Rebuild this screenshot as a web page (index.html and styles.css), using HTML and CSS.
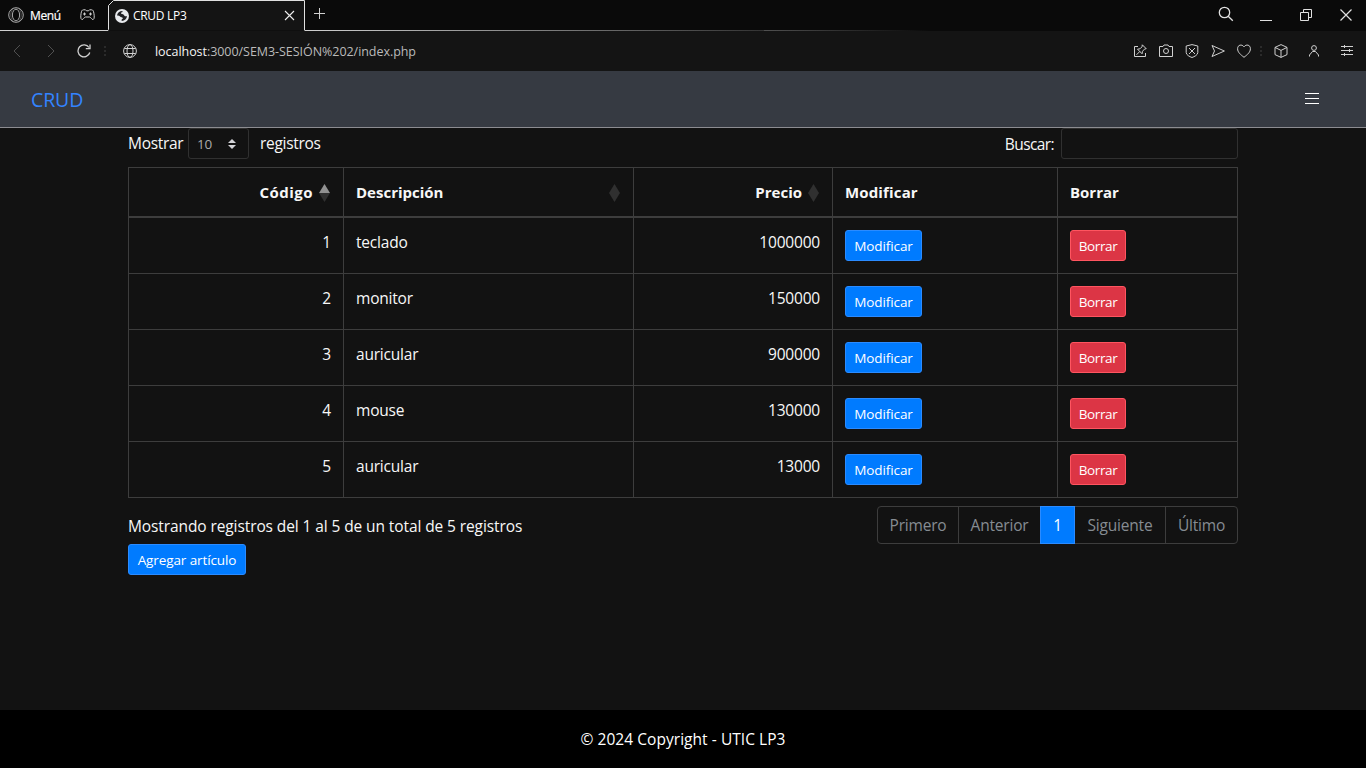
FILE: index.html
```html
<!DOCTYPE html>
<html lang="es">
<head>
<meta charset="utf-8">
<title>CRUD LP3</title>
<link rel="stylesheet" href="styles.css">
</head>
<body>
<header class="tabbar">
  <div class="menu">
    <svg class="opera" width="16" height="16" viewBox="0 0 16 16"><circle cx="8" cy="8" r="7.3"/><ellipse cx="8" cy="8" rx="3.6" ry="5.8"/><path d="M6 1.200C3.800 2.500 2.800 5 2.800 8s1 5.500 3.200 6.800M10 1.200c2.200 1.300 3.200 3.800 3.200 6.800s-1 5.500-3.200 6.800" opacity=".4"/></svg>
    <span class="menu-text">Menú</span>
    <svg class="pad" width="15" height="12" viewBox="0 0 15 12"><path d="M3.500.8h2l1 1h2l1-1h2c1.500 0 2 1.200 2.400 3.500.4 2.500.7 5.500-.7 6.200-1.500.5-2.300-2.500-3.500-2.500H5.300c-1.200 0-2 3-3.500 2.500C.4 9.800.7 6.800 1.100 4.300 1.500 2 2 .8 3.500.8z"/><path d="M3 5h3M4.500 3.500v3M9 5h3M10.500 3.500v3"/></svg>
  </div>
  <div class="tab">
    <svg class="tab-shape" width="197" height="31" viewBox="0 0 197 31"><path d="M0 30.500V30l.5-.5V5.500L5.500.5h191v30" /></svg>
    <svg class="favicon" width="14" height="14" viewBox="0 0 14 14"><circle cx="7" cy="7" r="7" fill="#e8eaed"/><path d="M2 6.500C2.300 3.800 4.500 2 7.500 2c.3 1.200-.6 1.400-1.500 1.600-.4 1.300.6 1.500 2 1.700 1.300.3 1 1.600 2 1.900.8.200 1.500 0 2-.2-.2 2.800-2.300 4.900-5.200 5-.6-1.200.1-1.800 1-2.200.2-1.400-.8-1.700-2.200-1.800C4.700 6.800 3.300 6.500 2 6.500z" fill="#202124"/></svg>
    <span class="tab-title">CRUD LP3</span>
    <svg class="tab-close" width="11" height="11" viewBox="0 0 11 11"><path d="M1 1l9 9M10 1l-9 9"/></svg>
  </div>
  <div class="tab-rest">
    <svg class="plus" width="11" height="11" viewBox="0 0 11 11"><path d="M5.500 0v11M0 5.500h11"/></svg>
    <div class="window-tools">
      <svg width="16" height="16" viewBox="0 0 16 16"><circle cx="6.500" cy="6.500" r="5.200"/><path d="M10.200 10.200l4.600 4.600"/></svg>
      <svg class="minimize" width="12" height="2" viewBox="0 0 12 2"><path d="M0 .5h12"/></svg>
      <svg class="restore" width="12" height="12" viewBox="0 0 12 12"><path d="M.5 3.500h8v8h-8zM3.500 3.500v-3h8v8h-3"/></svg>
      <svg width="12" height="12" viewBox="0 0 12 12"><path d="M.5.5l11 11M11.500.5l-11 11"/></svg>
    </div>
  </div>
</header>
<nav class="address">
  <svg class="back" width="8" height="14" viewBox="0 0 8 14"><path d="M7 1L1 7l6 6"/></svg>
  <svg class="forward" width="8" height="14" viewBox="0 0 8 14"><path d="M1 1l6 6-6 6"/></svg>
  <svg class="reload" width="14" height="14" viewBox="0 0 14 14"><path d="M12 3.500A6 6 0 1 0 12.800 8.500"/><path d="M13 .5v4.200H8.800"/></svg>
  <i class="dots"></i>
  <svg class="globe" width="14" height="14" viewBox="0 0 14 14"><circle cx="7" cy="7" r="6.400"/><ellipse cx="7" cy="7" rx="3" ry="6.400"/><path d="M1.300 4.500h11.400M1.300 9.500h11.400"/></svg>
  <span class="url"><b>localhost</b>:3000/SEM3-SESIÓN%202/index.php</span>
  <div class="address-tools">
    <svg width="14" height="14" viewBox="0 0 14 14"><path d="M5 2.500H1.500v10h11V9"/><path d="M9.300.8l3.900 3.900-1.700.4-2 2.200-.4 2.500L4.500 5.200 7 4.800l2-2zM6.800 7.500L3.500 10.800"/></svg>
    <svg width="14" height="14" viewBox="0 0 14 14"><path d="M.5 2.500H4L5 1h4l1 1.500h3.500v10H.5z"/><circle cx="7" cy="7" r="2.500"/></svg>
    <svg width="14" height="14" viewBox="0 0 14 14"><path d="M7 .6L12.800 2v6.500C12.800 11 9.500 12.600 7 13.500 4.500 12.600 1.200 11 1.200 8.500V2z"/><path d="M4 4l6 6M10 4l-6 6"/></svg>
    <svg width="14" height="14" viewBox="0 0 14 14"><path d="M1 1.500L13.400 7 1 12.500 3.500 7z"/></svg>
    <svg width="14" height="14" viewBox="0 0 14 14"><path d="M7 13.300C3.500 10.500.6 8.300.6 4.700.6.600 5 0 7 2.800 9 0 13.400.600 13.400 4.700c0 3.600-2.900 5.800-6.400 8.600z"/></svg>
    <i class="dots"></i>
    <svg class="cube" width="14" height="14" viewBox="0 0 14 14"><path d="M7 .6l6 2.800v7.200l-6 2.800-6-2.800V3.400zM1 3.400l6 3 6-3M7 6.400v7"/></svg>
    <svg class="person" width="12" height="14" viewBox="0 0 12 14"><circle cx="6" cy="4" r="2.400"/><path d="M1.500 12.500V11l3-3.500h3l3 3.500v1.500"/></svg>
    <svg class="sliders" width="12" height="12" viewBox="0 0 12 12"><path d="M0 1.500h12M0 5.500h12M0 9.500h12M3.500 0v3M8.500 4v3M3.500 8v3"/></svg>
  </div>
</nav>
<nav class="navbar">
  <a class="brand">CRUD</a>
  <div class="burger"><i></i><i></i><i></i></div>
</nav>
<main class="container">
  <div class="controls">
    <label class="length"><span class="t-mostrar">Mostrar</span>
      <span class="select"><span>10</span><svg width="8" height="10" viewBox="0 0 8 10"><path d="M4 0l4 4H0zM4 10L0 6h8z"/></svg></span>
      <span class="t-registros">registros</span></label>
    <label class="search"><span class="t-buscar">Buscar:</span><input type="text"></label>
  </div>
  <table class="table">
    <colgroup><col class="c1"><col class="c2"><col class="c3"><col class="c4"><col class="c5"></colgroup>
    <thead><tr>
      <th class="num"><div class="sort codigo"><span>Código</span><svg width="11" height="18" viewBox="0 0 11 18"><path class="on" d="M5.500 0L11 9H0z"/><path d="M5.500 18L0 9h11z"/></svg></div></th>
      <th><div class="sort wide"><span>Descripción</span><svg width="11" height="18" viewBox="0 0 11 18"><path d="M5.500 0L11 9 5.500 18 0 9z"/></svg></div></th>
      <th class="num"><div class="sort"><span>Precio</span><svg width="11" height="18" viewBox="0 0 11 18"><path d="M5.500 0L11 9 5.500 18 0 9z"/></svg></div></th>
      <th class="loose">Modificar</th><th>Borrar</th></tr></thead>
    <tbody>
      <tr><td class="num">1</td><td>teclado</td><td class="num">1000000</td><td><button class="btn mod">Modificar</button></td><td><button class="btn del">Borrar</button></td></tr>
      <tr><td class="num">2</td><td>monitor</td><td class="num">150000</td><td><button class="btn mod">Modificar</button></td><td><button class="btn del">Borrar</button></td></tr>
      <tr><td class="num">3</td><td>auricular</td><td class="num">900000</td><td><button class="btn mod">Modificar</button></td><td><button class="btn del">Borrar</button></td></tr>
      <tr><td class="num">4</td><td>mouse</td><td class="num">130000</td><td><button class="btn mod">Modificar</button></td><td><button class="btn del">Borrar</button></td></tr>
      <tr><td class="num">5</td><td>auricular</td><td class="num">13000</td><td><button class="btn mod">Modificar</button></td><td><button class="btn del">Borrar</button></td></tr>
    </tbody>
  </table>
  <div class="below">
    <span class="info">Mostrando registros del 1 al 5 de un total de 5 registros</span>
    <div class="pages"><span class="p1">Primero</span><span class="p2">Anterior</span><span class="p3">1</span><span class="p4">Siguiente</span><span class="p5">Último</span></div>
  </div>
  <button class="btn add">Agregar artículo</button>
</main>
<footer class="footer"><span>© 2024 Copyright - UTIC LP3</span></footer>
</body>
</html>
```
FILE: styles.css
```css
* { box-sizing: border-box; }
body {
  margin: 0;
  height: 768px;
  overflow: hidden;
  display: flex;
  flex-direction: column;
  background: #121212;
  color: #f7f7f7;
  font: 15.5px/24px "Open Sans", "Noto Sans", sans-serif;
}
svg { display: block; flex: none; fill: none; stroke: #d0d0d0; stroke-width: 1; }

.tabbar { display: flex; height: 31px; flex: none; background: #0a0a0a; }
.menu { width: 108px; padding-left: 8px; display: flex; align-items: center; border-bottom: 1px solid #d0d0d0; }
.opera { stroke: #aaa; }
.menu-text { width: 50px; margin-left: 6px; padding-top: 1px; font-size: 12px; color: #fff; letter-spacing: -.4px; -webkit-text-stroke: .2px #fff; }
.tab { position: relative; width: 197px; padding: 0 10px 0 7px; display: flex; align-items: center; }
.tab-shape { position: absolute; left: 0; top: 0; }
.tab-shape path { fill: #141414; stroke: #e0e0e0; }
.favicon { position: relative; stroke: none; }
.tab-title { position: relative; margin-left: 4px; font-size: 12px; color: #fff; letter-spacing: -.3px; }
.tab-close { position: relative; margin-left: auto; stroke: #eee; stroke-width: 1.1; }
.tab-rest {
  flex: 1;
  display: flex;
  justify-content: space-between;
  padding: 8px 14px 0 9px;
  background:
    linear-gradient(90deg, #d0d0d0, #333) 0 100% / 459px 1px no-repeat,
    linear-gradient(90deg, #505050, #0a0a0a) 459px 100% / 165px 1px no-repeat;
}
.window-tools { display: flex; margin-top: -2px; }
.window-tools svg { stroke: #e0e0e0; }
.window-tools svg:first-child { stroke-width: 1.3; }
.window-tools .minimize { margin: 14px 0 0 26px; }
.window-tools .restore { margin: 3px 28px 0; }
.window-tools svg:last-child { margin-top: 3px; stroke-width: 1.2; }

.address { display: flex; align-items: center; height: 40px; flex: none; padding: 0 13px; background: #141414; }
.back, .forward { stroke: #505050; }
.forward { margin-left: 26px; }
.reload { margin-left: 22px; stroke-width: 1.3; }
.dots { width: 2px; height: 10px; flex: none; background: linear-gradient(#2b2b2b 2px, transparent 2px) 0 0 / 2px 4px; }
.reload + .dots { margin-left: 13px; }
.globe { margin-left: 17px; }
.url { margin-left: 18px; padding-top: 1px; font-size: 12.500px; letter-spacing: -.05px; color: #bbb; }
.url b { color: #f4f4f4; font-weight: 400; }
.address-tools { margin-left: auto; display: flex; align-items: center; gap: 12px; }
.address-tools .dots { margin-left: -3px; }
.address-tools .person { margin-left: 8px; }
.address-tools .sliders { margin-left: 9px; }

.navbar { height: 57px; flex: none; display: flex; justify-content: space-between; background: #363a42; border-bottom: 1px solid #8c8c91; padding: 14px 47px 0 31px; }
.brand { font-size: 19.500px; line-height: 30px; letter-spacing: -.1px; color: #3384ff; }
.burger { width: 14px; padding-top: 8px; display: flex; flex-direction: column; gap: 4px; }
.burger i { height: 1px; background: #fff; }

.container { width: 1110px; margin: 0 auto; flex: 1; letter-spacing: -.1px; }
.controls { display: flex; justify-content: space-between; height: 39px; }
.length, .search { display: flex; align-items: flex-start; }
.t-mostrar { width: 60px; padding-top: 3px; letter-spacing: -.3px; white-space: nowrap; }
.t-registros { padding: 3px 0 0 11px; letter-spacing: -.3px; }
.t-buscar { padding: 4px 7px 0 0; letter-spacing: -.6px; }
.select { width: 61px; height: 31px; padding: 0 12px 0 8px; display: flex; justify-content: space-between; align-items: center; border: 1px solid #303030; border-radius: 3px; font-size: 13.500px; color: #aaa; }
.select svg { stroke: none; fill: #d4d4d8; }
.search input { width: 177px; height: 31px; border: 1px solid #303030; border-radius: 3px; background: transparent; color: inherit; }

.table { width: 1110px; table-layout: fixed; border-collapse: separate; border-spacing: 0; border-right: 1px solid #3d3d3d; }
.c1 { width: 215px; } .c2 { width: 290px; } .c3 { width: 199px; } .c4 { width: 225px; } .c5 { width: 180px; }
th, td { padding: 12px 12px 0; border: 0 solid #3d3d3d; border-left-width: 1px; text-align: left; vertical-align: top; }
th { height: 51px; border-top-width: 1px; border-bottom-width: 2px; font-weight: 700; font-size: 15px; letter-spacing: 0; }
td { height: 56px; padding-top: 12px; border-bottom-width: 1px; letter-spacing: -.2px; }
td:last-child, th:last-child { padding-left: 12px; }
.num { text-align: right; }
.loose { letter-spacing: .15px; }
.sort { display: flex; justify-content: flex-end; align-items: center; gap: 6px; margin-right: 1px; }
.codigo { letter-spacing: .45px; }
.sort.wide { justify-content: space-between; }
.sort svg { stroke: none; fill: #303030; margin-top: 1px; }
.sort .on { fill: #919191; }

.btn { display: flex; align-items: center; justify-content: center; height: 31px; padding: 2px 0 0; border: 1px solid #2b8bff; border-radius: 3px; background: #007bff; color: #fff; font: 13.500px/21px "Open Sans", "Noto Sans", sans-serif; letter-spacing: -.1px; white-space: nowrap; }
.del { width: 56px; background: #dc3545; border-color: #ff5560; letter-spacing: -.4px; }
.mod { width: 77px; }
.add { width: 118px; }

.below { display: flex; justify-content: space-between; margin-top: 8px; height: 38px; }
.info { line-height: 24px; padding-top: 8px; }
.pages { display: flex; height: 38px; border: 1px solid #3d3d3d; border-radius: 4px; color: #868c92; letter-spacing: -.2px; }
.pages span { line-height: 37px; text-align: center; }
.p1 { width: 80px; }
.p2 { width: 82px; border-left: 1px solid #3d3d3d; }
.pages .p3 { width: 35px; margin: -1px 0; line-height: 39px; background: #007bff; border: 1px solid #2b8bff; border-bottom-width: 1px; line-height: 37px; color: #fff; }
.p4 { width: 90px; }
.p5 { width: 72px; border-left: 1px solid #3d3d3d; }

.footer { height: 58px; flex: none; background: #000; color: #fff; text-align: center; padding-top: 17px; letter-spacing: .05px; }
```
